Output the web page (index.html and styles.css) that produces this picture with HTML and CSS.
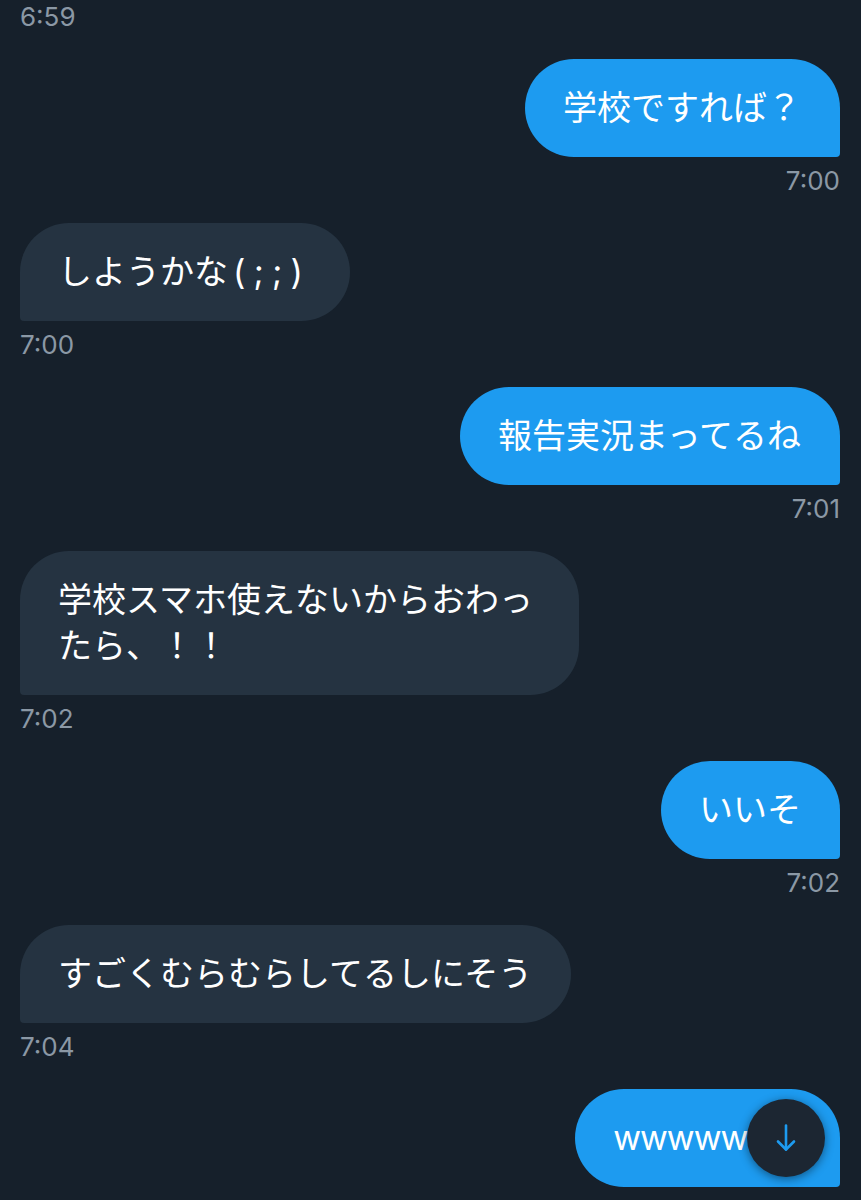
FILE: index.html
```html
<!DOCTYPE html>
<html lang="ja">
<head>
  <meta charset="UTF-8" />
  <meta name="viewport" content="width=device-width, initial-scale=1" />
  <title>メッセージ</title>
  <link rel="stylesheet" href="styles.css">
</head>
<body>
  <div class="thread">
    <div class="time">6:59</div>

    <div class="msg sent">
      <div class="bubble">学校ですれば？</div>
      <div class="time">7:00</div>
    </div>

    <div class="msg received">
      <div class="bubble">しようかな<span class="kao">(;;)</span></div>
      <div class="time">7:00</div>
    </div>

    <div class="msg sent">
      <div class="bubble">報告実況まってるね</div>
      <div class="time">7:01</div>
    </div>

    <div class="msg received">
      <div class="bubble">学校スマホ使えないからおわったら、！！</div>
      <div class="time">7:02</div>
    </div>

    <div class="msg sent">
      <div class="bubble">いいそ</div>
      <div class="time">7:02</div>
    </div>

    <div class="msg received">
      <div class="bubble">すごくむらむらしてるしにそう</div>
      <div class="time">7:04</div>
    </div>

    <div class="msg sent">
      <div class="bubble"><span class="latin">wwwwwww</span></div>
    </div>
  </div>

  <button class="scroll-down" aria-label="最新のメッセージへ">
    <svg width="36" height="36" viewBox="0 0 36 36" fill="none" stroke="#1d9bf0" stroke-width="2.6" stroke-linecap="round" stroke-linejoin="round">
      <path d="M18 5.5v24"/>
      <path d="M10 21.5l8 8 8-8"/>
    </svg>
  </button>
</body>
</html>
```

FILE: styles.css
```css
body {
  margin: 0;
  background-color: #16202b;
  font-family: Inter, "Noto Sans CJK JP", sans-serif;
  overflow: hidden;
}
.thread {
  display: flex;
  flex-direction: column;
  padding: 3px 21px 0 20px;
}
.time {
  font-size: 26px;
  line-height: 28px;
  color: #8b98a5;
}
.msg {
  display: flex;
  flex-direction: column;
  margin-top: 28px;
}
.msg .time {
  margin-top: 10px;
}
.sent {
  align-items: flex-end;
}
.received {
  align-items: flex-start;
}
.bubble {
  max-width: 482px;
  padding: 26px 39px 26px 38px;
  font-size: 34px;
  line-height: 46px;
  color: #ffffff;
}
.sent .bubble {
  background-color: #1d9bf0;
  border-radius: 49px 49px 4px 49px;
}
.received .bubble {
  background-color: #253341;
  border-radius: 49px 49px 49px 4px;
}
.kao {
  letter-spacing: 0.24em;
  margin-left: 5px;
}
.latin {
  letter-spacing: -1px;
}
.scroll-down {
  position: fixed;
  right: 36px;
  bottom: 23px;
  width: 78px;
  height: 78px;
  border: none;
  border-radius: 50%;
  background-color: #1c2632;
  box-shadow: 0 2px 10px rgba(0, 0, 0, 0.45);
  display: flex;
  align-items: center;
  justify-content: center;
  padding: 0;
  cursor: pointer;
}
```
